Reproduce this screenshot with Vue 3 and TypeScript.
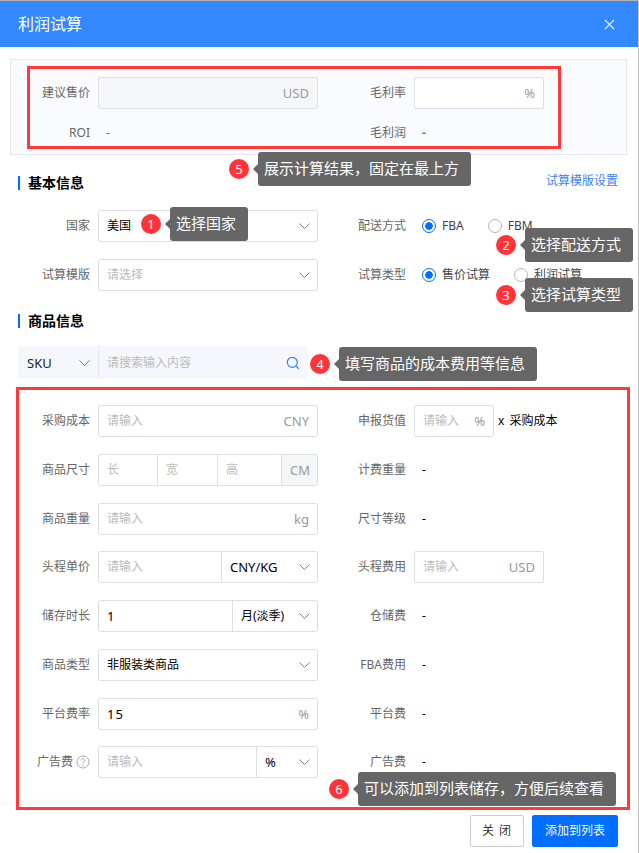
<script setup lang="ts">
interface Tip { n: number; text: string; cls: string }
const tips: Tip[] = [
  { n: 1, text: '选择国家', cls: 't1' },
  { n: 2, text: '选择配送方式', cls: 't2' },
  { n: 3, text: '选择试算类型', cls: 't3' },
  { n: 4, text: '填写商品的成本费用等信息', cls: 't4' },
  { n: 5, text: '展示计算结果，固定在最上方', cls: 't5' },
  { n: 6, text: '可以添加到列表储存，方便后续查看', cls: 't6' }
]
</script>

<template>
  <div class="dialog">
    <header class="head">
      <span class="title">利润试算</span>
      <svg class="close" width="11" height="11" viewBox="0 0 12 12"><path d="M1 1l10 10M11 1L1 11" stroke="#fff" stroke-width="1.4" fill="none" /></svg>
    </header>

    <section class="result">
      <div class="grid result-grid">
        <label class="lbl">建议售价</label>
        <div class="ctl disabled"><span class="grow"></span><span class="suffix">USD</span></div>
        <label class="lbl">毛利率</label>
        <div class="ctl w130"><span class="grow"></span><span class="suffix">%</span></div>
        <label class="lbl">ROI</label>
        <div class="val roi">-</div>
        <label class="lbl">毛利润</label>
        <div class="val green">-</div>
      </div>
    </section>

    <div class="sec first">
      <h3>基本信息</h3>
      <a class="link">试算模版设置</a>
    </div>
    <div class="grid basic">
      <label class="lbl">国家</label>
      <div class="ctl"><span class="grow text">美国</span><svg class="chev" viewBox="0 0 11 6"><path d="M.5.5l5 5 5-5" /></svg></div>
      <label class="lbl">配送方式</label>
      <div class="radios">
        <span class="radio on"></span><span class="rtext">FBA</span>
        <span class="radio"></span><span class="rtext">FBM</span>
      </div>
      <label class="lbl">试算模版</label>
      <div class="ctl"><span class="grow ph">请选择</span><svg class="chev" viewBox="0 0 11 6"><path d="M.5.5l5 5 5-5" /></svg></div>
      <label class="lbl">试算类型</label>
      <div class="radios">
        <span class="radio on"></span><span class="rtext">售价试算</span>
        <span class="radio"></span><span class="rtext">利润试算</span>
      </div>
    </div>

    <div class="sec second"><h3>商品信息</h3></div>
    <div class="search">
      <div class="search-type"><span class="latin">SKU</span><svg class="chev blue" viewBox="0 0 11 6"><path d="M.5.5l5 5 5-5" /></svg></div>
      <div class="search-input">
        <span class="grow ph">请搜索输入内容</span>
        <svg width="14" height="14" viewBox="0 0 14 14" fill="none" stroke="#3b82f6" stroke-width="1.2"><circle cx="6.3" cy="6.3" r="5" /><path d="M10 10l2.8 2.8" /></svg>
      </div>
    </div>

    <div class="grid goods">
      <label class="lbl">采购成本</label>
      <div class="ctl"><span class="grow ph">请输入</span><span class="suffix">CNY</span></div>
      <label class="lbl">申报货值</label>
      <div class="inline">
        <div class="ctl w80"><span class="grow ph">请输入</span><span class="suffix">%</span></div>
        <span class="text times">x 采购成本</span>
      </div>

      <label class="lbl">商品尺寸</label>
      <div class="ctl split">
        <span class="cell c-l ph">长</span><span class="cell c-w ph">宽</span><span class="cell c-h ph">高</span><span class="cell unit">CM</span>
      </div>
      <label class="lbl">计费重量</label>
      <div class="val">-</div>

      <label class="lbl">商品重量</label>
      <div class="ctl"><span class="grow ph">请输入</span><span class="suffix">kg</span></div>
      <label class="lbl">尺寸等级</label>
      <div class="val">-</div>

      <label class="lbl">头程单价</label>
      <div class="ctl split">
        <span class="cell grow ph">请输入</span>
        <span class="cell sel s96"><span class="grow text latin">CNY/KG</span><svg class="chev" viewBox="0 0 11 6"><path d="M.5.5l5 5 5-5" /></svg></span>
      </div>
      <label class="lbl">头程费用</label>
      <div class="ctl w130"><span class="grow ph">请输入</span><span class="suffix">USD</span></div>

      <label class="lbl">储存时长</label>
      <div class="ctl split">
        <span class="cell grow text latin">1</span>
        <span class="cell sel s85"><span class="grow text">月(淡季)</span><svg class="chev" viewBox="0 0 11 6"><path d="M.5.5l5 5 5-5" /></svg></span>
      </div>
      <label class="lbl">仓储费</label>
      <div class="val">-</div>

      <label class="lbl">商品类型</label>
      <div class="ctl"><span class="grow text">非服装类商品</span><svg class="chev" viewBox="0 0 11 6"><path d="M.5.5l5 5 5-5" /></svg></div>
      <label class="lbl">FBA费用</label>
      <div class="val">-</div>

      <label class="lbl">平台费率</label>
      <div class="ctl"><span class="grow text latin spaced">15</span><span class="suffix">%</span></div>
      <label class="lbl">平台费</label>
      <div class="val">-</div>

      <label class="lbl help">广告费
        <svg width="14" height="14" viewBox="0 0 14 14" fill="none" stroke="#aaa"><circle cx="7" cy="7" r="6" /><path d="M5.200 5.500c0-2.400 3.700-2.400 3.700-.2 0 1.400-1.900 1.500-1.900 3" /><path d="M7 9.500v1.200" /></svg>
      </label>
      <div class="ctl split">
        <span class="cell grow ph">请输入</span>
        <span class="cell sel s61"><span class="grow text latin">%</span><svg class="chev" viewBox="0 0 11 6"><path d="M.5.5l5 5 5-5" /></svg></span>
      </div>
      <label class="lbl">广告费</label>
      <div class="val">-</div>
    </div>

    <footer class="foot">
      <button class="btn">关 闭</button>
      <button class="btn primary">添加到列表</button>
    </footer>

    <div class="mark m1"></div>
    <div class="mark m2"></div>
    <div v-for="t in tips" :key="t.n" class="tip" :class="t.cls">
      <span class="badge">{{ t.n }}</span>
      <span class="bubble">{{ t.text }}</span>
    </div>
  </div>
</template>

<style>
html, body { margin: 0; background: #fff; }
</style>

<style scoped>
.dialog {
  position: relative;
  box-sizing: border-box;
  width: 639px;
  height: 853px;
  overflow: hidden;
  background: #fff;
  border-top: 1px solid #b4b4b4;
  border-right: 1px solid #c4c4c4;
  font: 12px/20px "Noto Sans", "Noto Sans CJK SC", sans-serif;
  color: #666;
}
.head {
  display: flex;
  align-items: center;
  justify-content: space-between;
  height: 46px;
  padding: 0 23px 0 18px;
  background: #3388ff;
  color: #fff;
}
.title { font-size: 16px; }
.grid {
  display: grid;
  grid-template-columns: 72px 220px 80px 1fr;
  column-gap: 8px;
  align-items: center;
  padding-left: 18px;
}
.result {
  box-sizing: border-box;
  height: 96px;
  margin: 12px 11px 0 10px;
  padding-top: 17px;
  border: 1px solid #e4e7ed;
  background: #fafbff;
}
.result-grid { padding-left: 7px; grid-template-rows: 32px 20px; row-gap: 14px; }
.lbl { text-align: right; color: #666; white-space: nowrap; }
.ctl {
  box-sizing: border-box;
  display: flex;
  align-items: center;
  height: 32px;
  padding: 0 8px;
  background: #fff;
  border: 1px solid #dcdfe6;
  border-radius: 2px;
}
.disabled { background: #f5f6f8; }
.w130 { width: 130px; }
.w80 { width: 80px; }
.grow { flex: 1; min-width: 0; }
.text { color: #000; }
.latin { font-size: 13px; }
.spaced { letter-spacing: 1px; }
.ph { color: #bbb; }
.suffix { color: #999; font-size: 13px; }
.val { padding-left: 8px; color: #000; }
.roi { color: #4f8a3c; }
.green { color: #22b80c; font-weight: 700; }
.sec {
  display: flex;
  align-items: center;
  justify-content: space-between;
  height: 14px;
  padding: 0 20px 0 18px;
}
.first { margin-top: 21px; }
.second { margin-top: 23px; }
.sec h3 {
  margin: 0;
  padding-left: 8px;
  border-left: 2px solid #006eff;
  font-size: 14px;
  line-height: 14px;
  font-weight: 700;
  color: #000;
}
.link { color: #3b7ff5; margin-top: -4px; }
.basic { margin-top: 20px; grid-template-rows: 32px 32px; row-gap: 17px; }
.chev { width: 11px; height: 6px; margin-right: -1px; fill: none; stroke: #808080; stroke-width: 1; flex: none; overflow: visible; }
.chev.blue { stroke: #3b82f6; }
.radios { display: flex; align-items: center; padding-left: 8px; }
.radio {
  box-sizing: border-box;
  width: 14px;
  height: 14px;
  margin-right: 6px;
  border: 1px solid #b5b5b5;
  border-radius: 50%;
  background: #fff;
}
.radio.on { border-color: #006eff; background: radial-gradient(circle, #006eff 3.500px, #fff 4px); }
.rtext { margin-right: 24px; color: #444; }
.search { display: flex; height: 33px; margin: 18px 0 0 18px; width: 290px; }
.search-type {
  box-sizing: border-box;
  display: flex;
  align-items: center;
  justify-content: space-between;
  width: 81px;
  padding: 0 9px 0 9px;
  background: #f5f7fd;
  border-right: 1px solid #e4e9f5;
  color: #222;
}
.search-input {
  display: flex;
  align-items: center;
  flex: 1;
  padding: 0 8px;
  background: #f5f7fd;
  border-radius: 0 2px 2px 0;
}
.goods { margin-top: 26px; row-gap: 16.75px; grid-auto-rows: 32px; }
.inline { display: flex; align-items: center; }
.times { margin-left: 4px; word-spacing: 2px; }
.split { padding: 0; overflow: hidden; }
.cell {
  box-sizing: border-box;
  display: flex;
  align-items: center;
  height: 100%;
  padding: 0 8px;
}
.cell + .cell { border-left: 1px solid #dcdfe6; }
.c-l { width: 58px; }
.c-w { width: 60px; }
.c-h { width: 64px; }
.unit { flex: 1; background: #f5f6f8; color: #999; padding: 0 0 0 8px; font-size: 13px; }
.sel { flex: none; }
.s96 { width: 96px; }
.s85 { width: 85px; }
.s61 { width: 61px; }
.help { display: flex; align-items: center; justify-content: flex-end; gap: 3px; white-space: nowrap; }
.foot {
  position: absolute;
  left: 0;
  right: 0;
  top: 814px;
  display: flex;
  justify-content: flex-end;
  gap: 8px;
  padding-right: 20px;
}
.foot::before {
  content: "";
  position: absolute;
  left: 0;
  right: 0;
  top: -18px;
  height: 8px;
  background: linear-gradient(#fff, #fafafa);
}
.btn {
  box-sizing: border-box;
  height: 32px;
  width: 54px;
  padding: 0;
  border: 1px solid #ccc;
  border-radius: 2px;
  background: #fff;
  color: #333;
  font: inherit;
  letter-spacing: 1px;
}
.btn.primary { width: 86px; background: #006eff; border-color: #006eff; color: #fff; letter-spacing: 0; }
.mark { position: absolute; box-sizing: border-box; border: 3px solid #ff3a3a; pointer-events: none; }
.m1 { left: 27px; top: 65px; width: 534px; height: 83px; }
.m2 { left: 16px; top: 386px; width: 614px; height: 423px; }
.tip { position: absolute; display: flex; align-items: center; height: 34px; }
.badge {
  width: 20px;
  height: 20px;
  margin-right: 9px;
  border-radius: 50%;
  background: #ff3338;
  color: #fff;
  font-size: 13px;
  line-height: 20px;
  text-align: center;
}
.bubble {
  position: relative;
  height: 34px;
  padding: 0 12px 0 6px;
  border-radius: 3px;
  background: #666;
  color: #fff;
  font-size: 15px;
  line-height: 33px;
  white-space: nowrap;
}
.bubble::before {
  content: "";
  position: absolute;
  left: -5px;
  top: 12px;
  border: 5px solid transparent;
  border-left: 0;
  border-right-color: #666;
}
.t1 { left: 141px; top: 206px; }
.t2 { left: 496px; top: 227px; }
.t3 { left: 496px; top: 277px; }
.t4 { left: 310px; top: 346px; }
.t5 { left: 229px; top: 151px; }
.t6 { left: 329px; top: 771px; }
</style>
